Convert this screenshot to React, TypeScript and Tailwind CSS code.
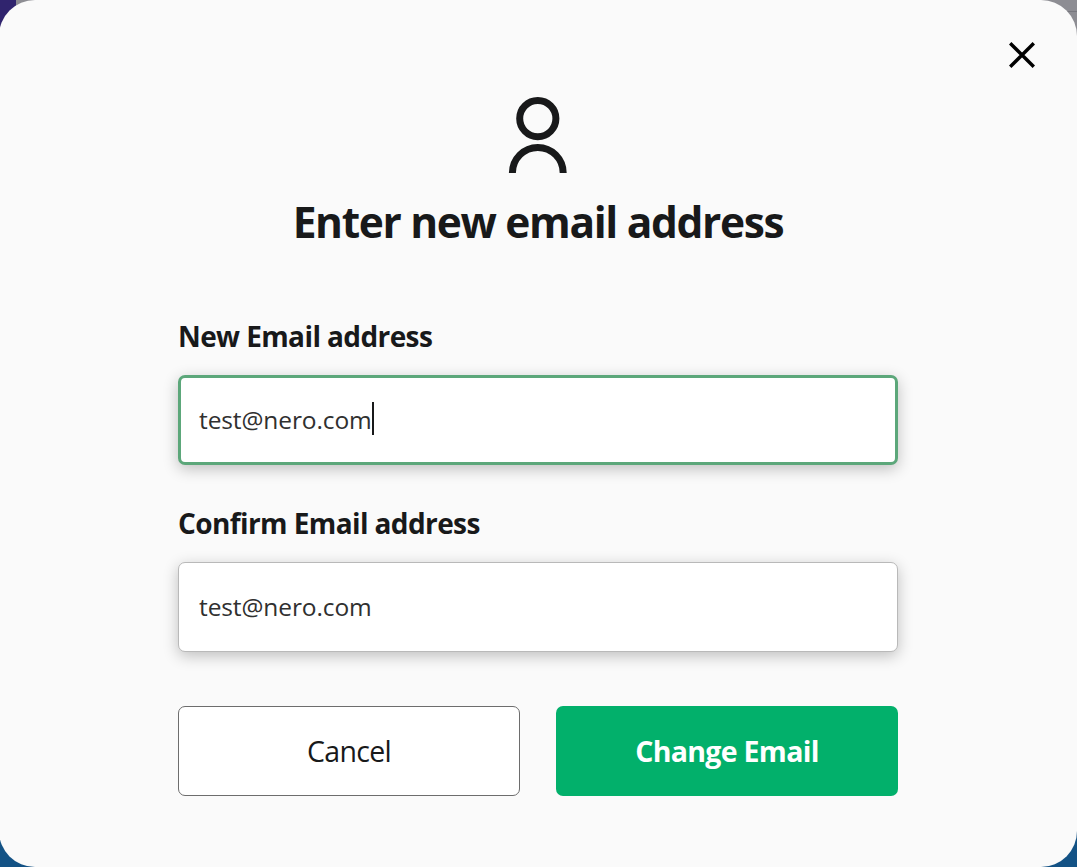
import { useState } from "react";

const UserIcon = () => (
  <svg width="60" height="78" viewBox="0 0 60 78" fill="none" stroke="#18191a" strokeWidth="7">
    <circle cx="29.8" cy="22.6" r="18.1" />
    <path d="M4.4 77A25.4 25.6 0 0 1 55.2 77" />
  </svg>
);

const CloseIcon = () => (
  <svg width="26" height="26" viewBox="0 0 26 26" fill="none" stroke="#000" strokeWidth="3.4">
    <path d="M1.2 1.2l23.6 23.6M24.8 1.2L1.2 24.8" />
  </svg>
);

interface FieldProps {
  label: string;
  value: string;
  focused?: boolean;
  onFocus: () => void;
}

const Field = ({ label, value, focused, onFocus }: FieldProps) => (
  <div>
    <p className="h-10 text-[28px] leading-10 font-bold tracking-[-0.6px] whitespace-nowrap">
      {label}
    </p>
    <div
      role="textbox"
      tabIndex={0}
      onFocus={onFocus}
      className={`mt-[19px] flex h-[90px] items-center rounded-[7px] bg-white shadow-[0_4px_15px_rgba(0,0,0,0.24)] outline-none ${
        focused ? "border-[3px] border-[#5ca77a] pl-[18px]" : "border border-[#b9b9b9] pl-5"
      }`}
    >
      <span className="text-[24.5px] leading-[34px] tracking-[-0.1px] text-[#303030]">{value}</span>
      {focused && <span className="mb-1 h-[33px] w-0.5 bg-[#18191a]" />}
    </div>
  </div>
);

export default function App() {
  const [active, setActive] = useState("new");

  return (
    <div className="relative h-[867px] w-[1077px] overflow-hidden bg-[#135285] font-['Open_Sans','Noto_Sans',sans-serif] text-[#18191a]">
      {/* page header behind the dialog */}
      <div className="absolute inset-x-0 top-0 flex h-20">
        <div className="w-4 bg-[#30246e]" />
        <div className="flex-1 bg-[#8d8d93]">
          <div className="mt-[11px] h-px bg-[#77777e]" />
        </div>
      </div>

      <div className="relative -ml-px h-full w-[1078px] rounded-[36px] bg-[#fafafa]">
        <button aria-label="Close" className="absolute top-[42px] left-[1010px]">
          <CloseIcon />
        </button>

        <div className="flex flex-col items-center pt-24">
          <UserIcon />
          <h1 className="mt-[18px] h-[60px] text-[42.5px] leading-[60px] font-bold tracking-[-1.35px] whitespace-nowrap">
            Enter new email address
          </h1>
        </div>

        <div className="mx-auto mt-16 w-[720px]">
          <Field
            label="New Email address"
            value="test@nero.com"
            focused={active === "new"}
            onFocus={() => setActive("new")}
          />
          <div className="mt-[38px]">
            <Field
              label="Confirm Email address"
              value="test@nero.com"
              focused={active === "confirm"}
              onFocus={() => setActive("confirm")}
            />
          </div>
          <div className="mt-[54px] grid grid-cols-2 gap-9">
            <button className="h-[90px] rounded-[7px] border border-[#6d6d6d] bg-white text-[28.5px]">
              <span className="tracking-[-0.7px]">Cancel</span>
            </button>
            <button className="h-[90px] rounded-[7px] bg-[#02b06b] text-[28.5px] font-bold text-white">
              <span className="tracking-[-0.7px]">Change Email</span>
            </button>
          </div>
        </div>
      </div>
    </div>
  );
}
